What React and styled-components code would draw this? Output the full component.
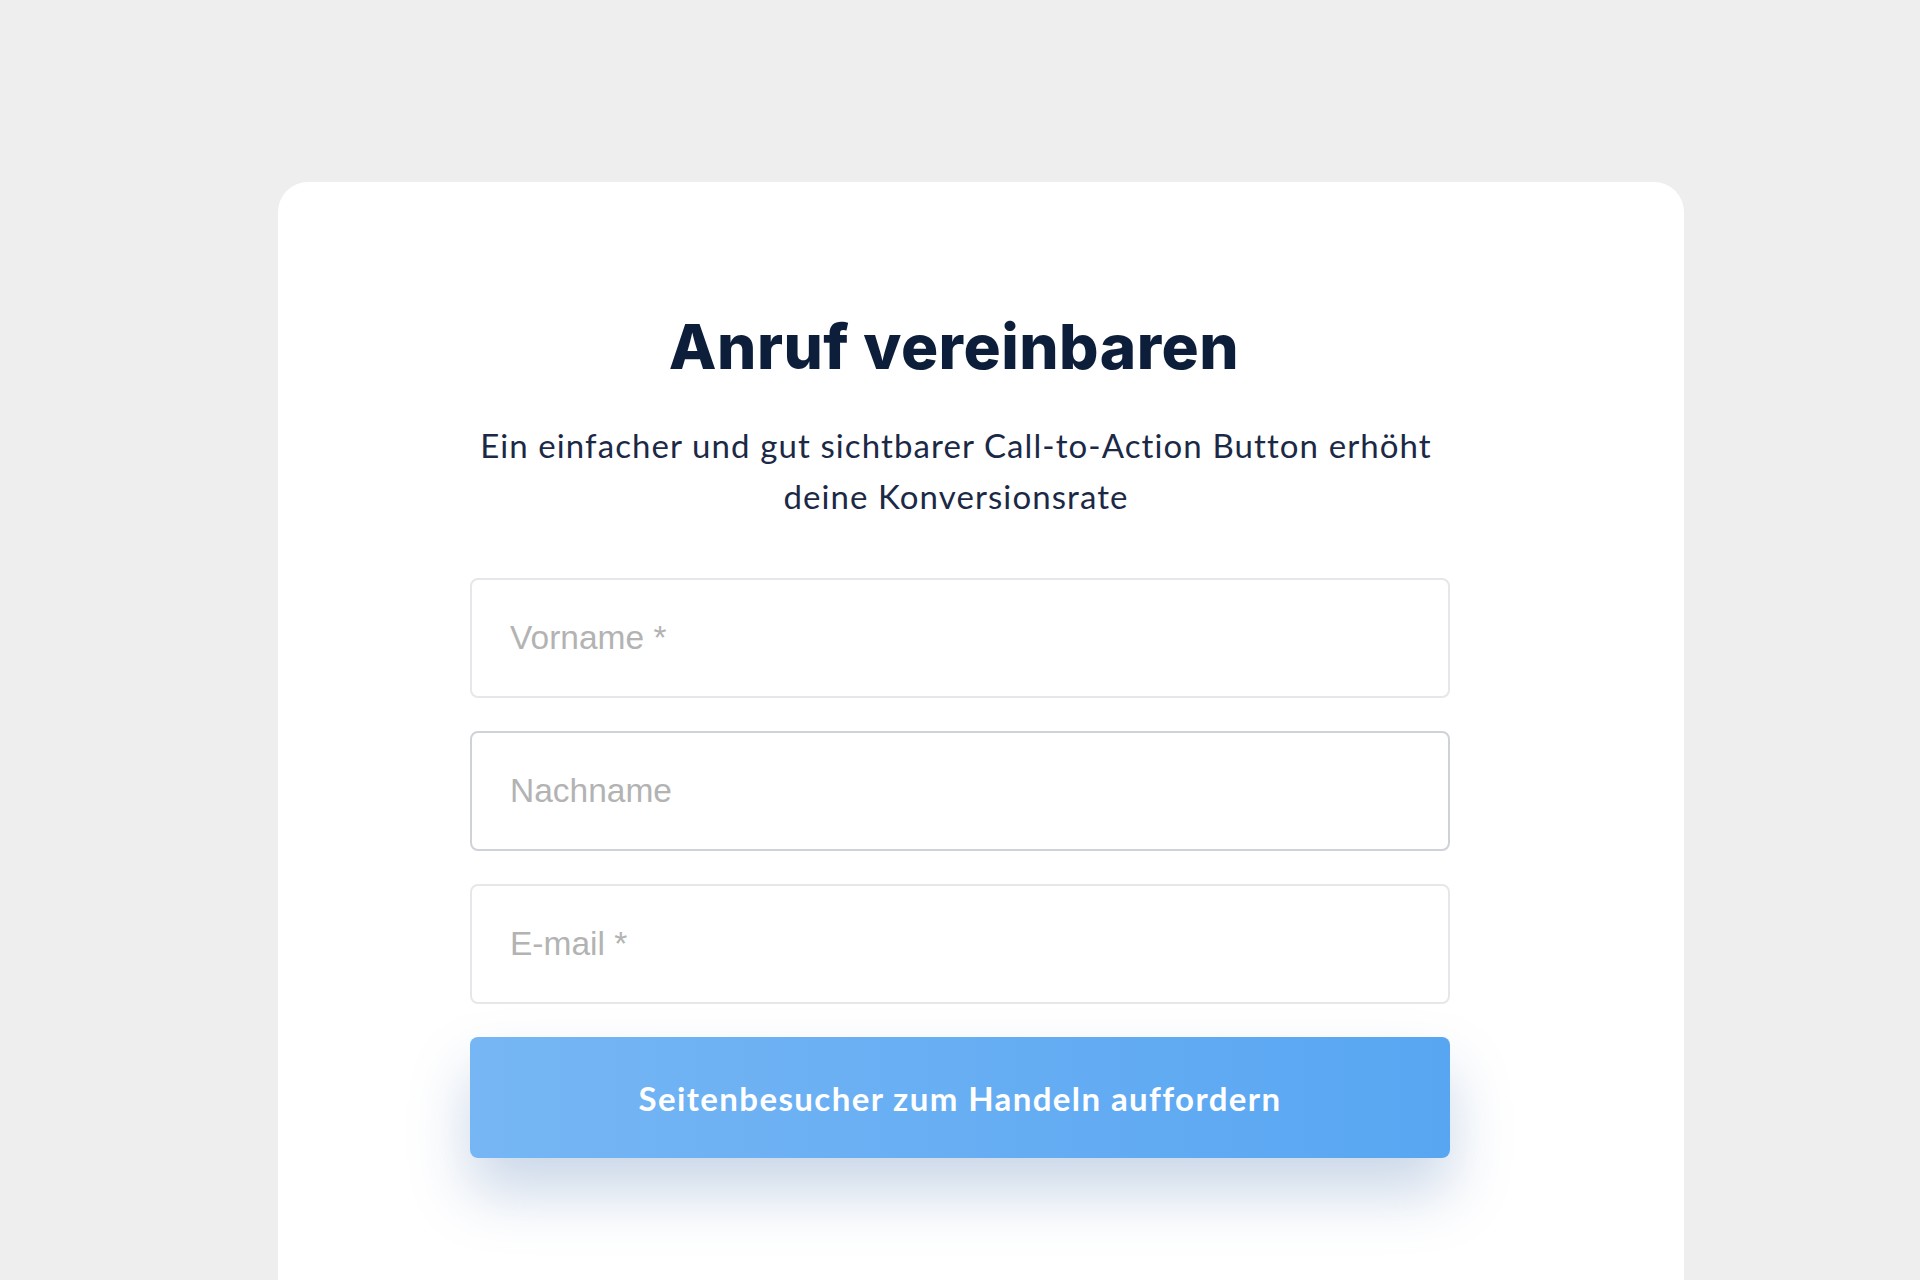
import React from 'react'
import styled, { createGlobalStyle } from 'styled-components'

const GlobalStyle = createGlobalStyle`
  html, body {
    margin: 0;
    padding: 0;
    background: #eeeeee;
    overflow: hidden;
  }
  * {
    box-sizing: border-box;
  }
`

const Page = styled.div`
  min-height: 1280px;
  padding-top: 182px;
  padding-left: 278px;
`

const Card = styled.div`
  width: 1406px;
  height: 1200px;
  background: #ffffff;
  border-radius: 30px;
  padding: 129px 234px 0 192px;
  display: flex;
  flex-direction: column;
  align-items: center;
`

const Title = styled.h1`
  margin: 0 12px 0 0;
  font-family: Inter, "Noto Sans", sans-serif;
  font-weight: 800;
  font-size: 62px;
  line-height: 72px;
  color: #0d1e3a;
  letter-spacing: 0.5px;
`

const Lead = styled.p`
  margin: 37px 8px 0 0;
  width: 1000px;
  font-family: Lato, "Noto Sans", sans-serif;
  font-size: 33px;
  line-height: 51px;
  letter-spacing: 1.1px;
  text-align: center;
  color: #1b2946;
`

const Form = styled.form`
  width: 980px;
  margin-top: 56px;
  display: flex;
  flex-direction: column;
  gap: 33px;
`

const Field = styled.input`
  width: 100%;
  height: 120px;
  border: 2px solid ${props => (props.$active ? '#d0d2d9' : '#e6e7eb')};
  border-radius: 8px;
  padding: 0 38px;
  font-family: "Liberation Sans", Arial, sans-serif;
  font-size: 33.5px;
  color: #1b2946;
  background: #ffffff;
  outline: none;
  &::placeholder {
    color: #b3b3b3;
  }
`

const Submit = styled.button`
  width: 100%;
  height: 121px;
  border: none;
  border-radius: 8px;
  background: linear-gradient(90deg, #76b6f4 0%, #58a6f2 100%);
  box-shadow: 0 34px 60px rgba(90, 130, 185, 0.32);
  color: #ffffff;
  font-family: Lato, "Noto Sans", sans-serif;
  font-weight: 700;
  font-size: 33px;
  letter-spacing: 1.4px;
  cursor: pointer;
`

export default function App() {
  return (
    <>
      <GlobalStyle />
      <Page>
        <Card>
          <Title>Anruf vereinbaren</Title>
          <Lead>
            Ein einfacher und gut sichtbarer Call-to-Action Button erhöht
            <br />
            deine Konversionsrate
          </Lead>
          <Form onSubmit={e => e.preventDefault()}>
            <Field placeholder="Vorname *" />
            <Field placeholder="Nachname" $active />
            <Field placeholder="E-mail *" />
            <Submit type="submit">Seitenbesucher zum Handeln auffordern</Submit>
          </Form>
        </Card>
      </Page>
    </>
  )
}
